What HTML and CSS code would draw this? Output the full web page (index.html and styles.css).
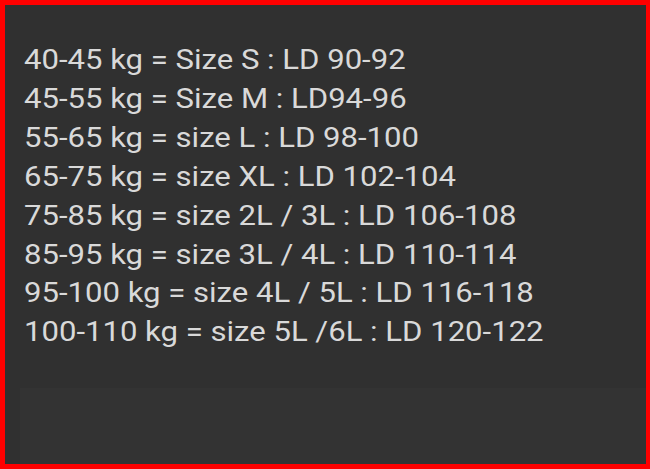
FILE: index.html
```html
<!DOCTYPE html>
<html lang="en">
<head>
<link rel="stylesheet" href="styles.css">
</head>
<body>
  <div class="frame">
    <section class="sizes">
      <p>40-45 kg = Size S : LD 90-92</p>
      <p>45-55 kg = Size M : LD94-96</p>
      <p>55-65 kg = size L : LD 98-100</p>
      <p>65-75 kg = size XL : LD 102-104</p>
      <p>75-85 kg = size 2L / 3L : LD 106-108</p>
      <p>85-95 kg = size 3L / 4L : LD 110-114</p>
      <p>95-100 kg = size 4L / 5L : LD 116-118</p>
      <p>100-110 kg = size 5L /6L : LD 120-122</p>
    </section>
    <section class="footer"></section>
  </div>
</body>
</html>
```

FILE: styles.css
```css
* {
    margin: 0;
    padding: 0;
    box-sizing: border-box;
}
body
{
    background: #ff0000;
    width: 650px;
    height: 469px;
    overflow: hidden;
}
.frame
{
    height: 469px;
    border: 5px solid #ff0000;
    border-right-width: 4px;
    background: #303030;
    display: flex;
    flex-direction: column;
}
.sizes
{
    padding: 36px 0 0 19px;
    height: 383px;
}
.sizes p
{
    width: max-content;
    font-family: Roboto, "Liberation Sans", sans-serif;
    font-size: 28px;
    line-height: 38.9px;
    color: #d9d9d9;
    white-space: nowrap;
    transform: scaleX(1.11);
    transform-origin: left center;
}
.footer
{
    flex: 1;
    margin-left: 15px;
    background: #333333;
}
```
